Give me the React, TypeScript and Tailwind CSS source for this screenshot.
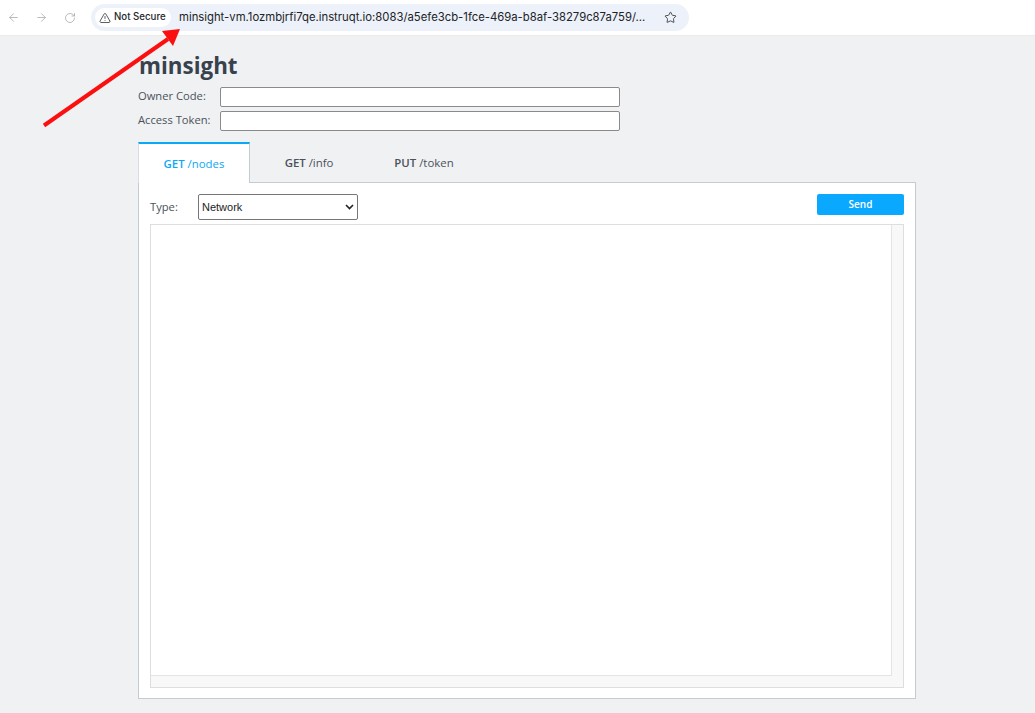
import { ArrowLeft, ArrowRight, RotateCw, Star, TriangleAlert } from "lucide-react";

const sans = "font-['Open_Sans',sans-serif]";

function Field({ label, mt }: { label: string; mt: string }) {
  return (
    <div className={`flex items-center ${mt}`}>
      <label className="mb-[2px] w-[82px] shrink-0 text-[11.2px] leading-[18px] text-[#4a525a]">{label}</label>
      <input className="h-[20px] w-[400px] rounded-[2px] border border-[#8a8a8a] bg-white" />
    </div>
  );
}

export default function App() {
  return (
    <div className={`relative h-[713px] w-[1035px] overflow-hidden bg-[#f0f1f3] ${sans}`}>
      {/* Browser toolbar */}
      <header className="flex h-[36px] items-start border-b border-[#ebebeb] bg-white pl-[7px] pt-[4px]">
        <div className="flex h-[27px] w-[84px] items-center gap-[15px]">
          <ArrowLeft size={13} strokeWidth={1.5} className="text-[#a9adb2]" />
          <ArrowRight size={13} strokeWidth={1.5} className="text-[#a9adb2]" />
          <RotateCw size={12} strokeWidth={1.5} className="ml-px text-[#a0a4a9]" />
        </div>
        <div className="flex h-[27px] w-[598px] items-center rounded-full bg-[#edf1f9] pl-[4px] font-['Inter',sans-serif]">
          <div className="flex h-[19px] w-[76px] items-center gap-[3px] rounded-full bg-white pl-[4px] text-[9.7px] font-medium text-[#26282b]">
            <TriangleAlert size={12} strokeWidth={1.5} />
            <span>Not Secure</span>
          </div>
          <span className="ml-[8px] w-[473px] whitespace-nowrap text-[11.3px] text-[#202327]">
            minsight-vm.1ozmbjrfi7qe.instruqt.io:8083/a5efe3cb-1fce-469a-b8af-38279c87a759/...
          </span>
          <Star size={13} strokeWidth={1.7} className="ml-[12px] text-[#3c4043]" />
        </div>
      </header>

      {/* Page */}
      <main className="ml-[138px] w-[778px]">
        <h1 className="mt-[14px] h-[32px] pl-px text-[22.4px] font-bold leading-[32px] text-[#37424d]">minsight</h1>
        <Field label="Owner Code:" mt="mt-[5px]" />
        <Field label="Access Token:" mt="mt-[4px]" />

        <nav className="relative z-10 mt-[11px] flex h-[41px] text-[11.4px]">
          <div className="flex h-[41px] w-[112px] items-center justify-center border-r border-r-[#c3cbd3] border-t-2 border-t-[#0aa8f5] border-l border-l-[#d8dde2] bg-white text-[#0aa8f5]">
            <b className="font-semibold">GET</b>&nbsp;/nodes
          </div>
          <div className="flex h-[42px] w-[118px] items-center justify-center text-[#4a525a]">
            <b className="font-semibold">GET</b>&nbsp;/info
          </div>
          <div className="flex h-[42px] w-[112px] items-center justify-center text-[#4a525a]">
            <b className="font-semibold">PUT</b>&nbsp;/token
          </div>
        </nav>

        <section className="-mt-px h-[517px] border border-[#c3cbd3] bg-white px-[11px] pt-[11px]">
          <div className="flex h-[26px] items-center">
            <span className="w-[48px] text-[11.2px] text-[#4a525a]">Type:</span>
            <div className="flex h-[26px] w-[160px] items-center justify-between rounded-[2px] border border-[#767676] bg-white pl-[3px] pr-[3px] font-['Liberation_Sans',sans-serif] text-[11px] text-[#1e1e1e]">
              <span>Network</span>
              <svg width="9" height="6" viewBox="0 0 9 6" fill="none" stroke="#222" strokeWidth="1.6">
                <path d="M1 1l3.5 3.5L8 1" />
              </svg>
            </div>
            <button className="mb-[5px] ml-auto h-[21px] w-[87px] rounded-[2px] bg-[#0aa8ff] text-[10px] font-semibold text-white">
              Send
            </button>
          </div>

          <div className="mt-[4px] flex h-[464px] w-[754px] flex-col border border-[#dedede] bg-[#f8f8f8]">
            <div className="flex min-h-0 flex-1">
              <div className="flex-1 border-r border-b border-[#e4e4e4] bg-white" />
              <div className="w-[11px]" />
            </div>
            <div className="h-[11px]" />
          </div>
        </section>
      </main>

      {/* Annotation arrow */}
      <svg className="absolute left-0 top-0" width="200" height="135" viewBox="0 0 200 135">
        <line x1="44" y1="125.5" x2="168" y2="39" stroke="#fb1010" strokeWidth="4" />
        <polygon points="180,29 162,31 173,46" fill="#fb1010" />
      </svg>
    </div>
  );
}
